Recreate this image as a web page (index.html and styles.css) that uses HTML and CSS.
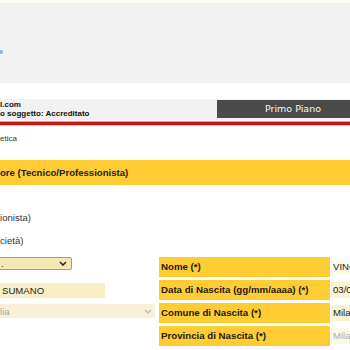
FILE: index.html
```html
<!DOCTYPE html>
<html lang="it">
<head>
  <meta charset="UTF-8" />
  <title>Anagrafica</title>
  <link rel="stylesheet" href="styles.css">
</head>
<body>
  <div class="topline"></div>
  <div class="banner"><span class="logo-bit"></span></div>

  <div class="userbar">
    <div class="userinfo">
      <div>l.com</div>
      <div>o soggetto: Accreditato</div>
    </div>
    <div class="primo">Primo Piano</div>
  </div>
  <div class="redline"></div>

  <div class="crumb">etica</div>
  <div class="section-title">ore (Tecnico/Professionista)</div>

  <div class="choices">
    <div>ionista)</div>
    <div>cietà)</div>
  </div>

  <div class="form-grid">
    <div class="ctrl">
      <div class="fake-select sel-title">
        <span>.</span>
        <svg width="8" height="5" viewBox="0 0 8 5"><path d="M1 1l3 3 3-3" fill="none" stroke="#222" stroke-width="1.5"/></svg>
      </div>
    </div>
    <div class="label">Nome (*)</div>
    <div class="value value-light">VINC</div>

    <div class="ctrl">
      <div class="fake-input">SUMANO</div>
    </div>
    <div class="label">Data di Nascita (gg/mm/aaaa) (*)</div>
    <div class="value">03/0</div>

    <div class="ctrl">
      <div class="fake-select sel-country">
        <span>lia</span>
        <svg width="8" height="5" viewBox="0 0 8 5"><path d="M1 1l3 3 3-3" fill="none" stroke="#b8b8b8" stroke-width="1.2"/></svg>
      </div>
    </div>
    <div class="label">Comune di Nascita (*)</div>
    <div class="value">Mila</div>

    <div class="ctrl"></div>
    <div class="label">Provincia di Nascita (*)</div>
    <div class="value value-off">Mila</div>
  </div>
</body>
</html>
```

FILE: styles.css
```css
html, body {
  overflow: hidden;
}

body {
  margin: 0;
  background: #fff;
  color: #222;
  font-family: "Liberation Sans", Arial, sans-serif;
  width: 350px;
}

.topline {
  height: 3px;
  background: #fbfbf2;
}

.banner {
  height: 80px;
  box-sizing: border-box;
  padding-top: 47px;
  background: #f2f2f2;
}

.logo-bit {
  display: block;
  width: 3px;
  height: 4px;
  background: #8bb8e0;
  border-radius: 0 2px 2px 0;
}

.userbar {
  margin-top: 16px;
  height: 21px;
  background: #f2f2f2;
  display: flex;
}

.userinfo {
  flex: none;
  width: 217px;
  padding-top: 1px;
  font-size: 8px;
  font-weight: bold;
  line-height: 9px;
  color: #111;
}

.primo {
  flex: none;
  width: 152px;
  height: 18px;
  margin-top: 1px;
  background: #4b4b4b;
  color: #f6f6f6;
  font-family: "DejaVu Sans", Verdana, sans-serif;
  font-size: 9.5px;
  line-height: 18px;
  text-align: center;
}

.redline {
  margin-top: 1px;
  height: 3px;
  background: #cc1616;
  border-top: 1px solid #e79a9a;
  border-bottom: 1px solid #f0c0c0;
}

.crumb {
  margin-top: 8px;
  font-size: 8px;
  line-height: 10px;
  color: #333;
}

.section-title {
  margin-top: 16px;
  height: 25px;
  line-height: 25px;
  background: #ffcc33;
  font-size: 9.6px;
  font-weight: bold;
  color: #222;
}

.choices {
  margin-top: 21px;
  font-size: 9.6px;
  line-height: 23px;
  color: #333;
}

.form-grid {
  margin-top: 5px;
  display: grid;
  grid-template-columns: 159px 172px 1fr;
  grid-auto-rows: 20px;
  row-gap: 3px;
}

.label {
  margin-right: 1px;
  padding-left: 2px;
  background: #ffcc33;
  font-size: 9.7px;
  font-weight: bold;
  line-height: 20px;
  color: #1a1a1a;
  white-space: nowrap;
}

.value {
  align-self: center;
  height: 16px;
  padding-left: 2px;
  background: #fbf2d2;
  font-size: 9.6px;
  line-height: 16px;
  color: #222;
  white-space: nowrap;
  overflow: hidden;
}

.value-light {
  background: #fdf9ec;
}

.value-off {
  background: #fcf7e6;
  color: #b0b0b0;
}

.ctrl {
  font-size: 9.6px;
}

.fake-select {
  display: flex;
  align-items: center;
  justify-content: space-between;
  box-sizing: border-box;
  margin-left: -10px;
  padding: 0 4px 0 10px;
}

.sel-title {
  width: 82px;
  height: 13px;
  background: #f6e8b4;
  border: 1px solid #9c9c9c;
  border-radius: 2px;
  color: #222;
}

.sel-country {
  width: 165px;
  height: 14px;
  margin-top: 1px;
  padding-right: 3px;
  background: #f8f1d8;
  color: #aaa;
}

.fake-input {
  box-sizing: border-box;
  width: 115px;
  height: 15px;
  margin-top: 3px;
  margin-left: -10px;
  padding-left: 12px;
  background: #f8efc8;
  line-height: 15px;
  color: #222;
}
```
